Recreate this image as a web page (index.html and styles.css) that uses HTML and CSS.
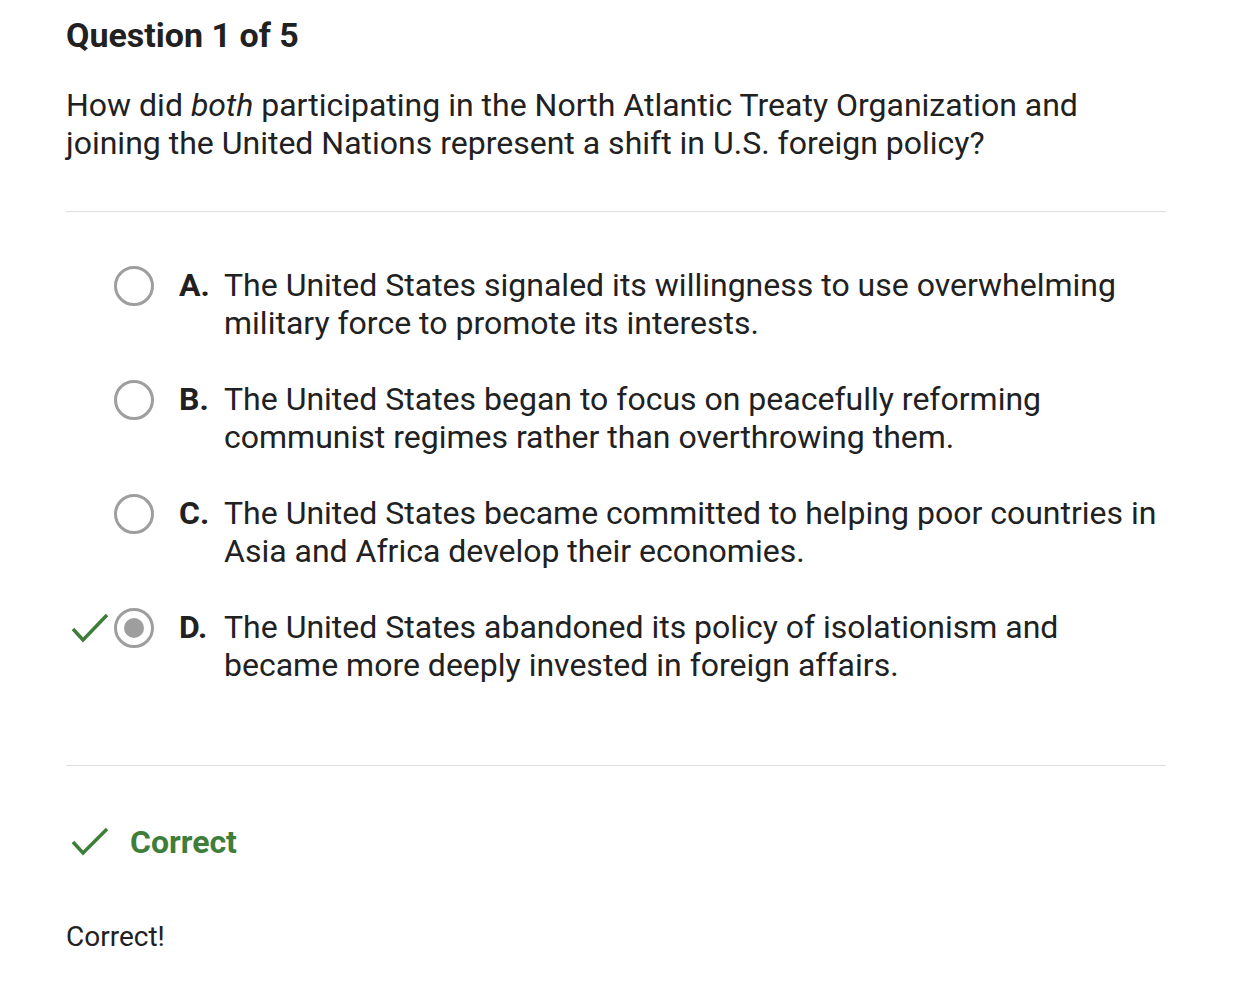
FILE: index.html
```html
<!DOCTYPE html>
<html lang="en">
<head>
    <meta charset="UTF-8">
    <title>Question 1 of 5</title>
    <link rel="stylesheet" href="styles.css">
</head>
<body>
    <div class="quiz">
        <h1 class="quiz-title">Question 1 of 5</h1>
        <p class="prompt">How did <em>both</em> participating in the North Atlantic Treaty Organization and joining the United Nations represent a shift in U.S. foreign policy?</p>

        <hr class="divider">

        <ul class="options">
            <li class="option">
                <span class="mark"></span>
                <span class="radio"></span>
                <span class="letter">A.</span>
                <span class="text">The United States signaled its willingness to use overwhelming military force to promote its interests.</span>
            </li>
            <li class="option">
                <span class="mark"></span>
                <span class="radio"></span>
                <span class="letter">B.</span>
                <span class="text">The United States began to focus on peacefully reforming communist regimes rather than overthrowing them.</span>
            </li>
            <li class="option">
                <span class="mark"></span>
                <span class="radio"></span>
                <span class="letter">C.</span>
                <span class="text">The United States became committed to helping poor countries in Asia and Africa develop their economies.</span>
            </li>
            <li class="option">
                <span class="mark">
                    <svg width="48" height="40" viewBox="0 0 48 40"><polyline points="7,21 17,32 41,7" fill="none" stroke="#3f7d3a" stroke-width="3.5"/></svg>
                </span>
                <span class="radio selected"></span>
                <span class="letter">D.</span>
                <span class="text">The United States abandoned its policy of isolationism and became more deeply invested in foreign affairs.</span>
            </li>
        </ul>

        <hr class="divider bottom">

        <div class="result">
            <svg width="48" height="40" viewBox="0 0 48 40"><polyline points="7,20 17,31 41,7" fill="none" stroke="#3f7d3a" stroke-width="3.5"/></svg>
            <span>Correct</span>
        </div>
        <p class="feedback">Correct!</p>
    </div>
</body>
</html>
```

FILE: styles.css
```css
body {
    margin: 0;
    font-family: Roboto, "Liberation Sans", Arial, sans-serif;
    color: #212121;
    background-color: #ffffff;
}
.quiz {
    width: 1100px;
    padding: 15px 0 0 66px;
}
.quiz-title {
    margin: 0;
    font-size: 34px;
    line-height: 40px;
    font-weight: 700;
}
.prompt {
    margin: 31px 0 0;
    font-size: 32px;
    line-height: 38px;
}
.divider {
    margin: 49px 0 0;
    border: none;
    border-top: 1px solid #dddddd;
    height: 0;
}
.divider.bottom {
    margin-top: 81px;
}
.options {
    list-style: none;
    margin: 54px 0 0;
    padding: 0;
}
.option {
    display: flex;
    align-items: flex-start;
    font-size: 32px;
    line-height: 38px;
    margin-bottom: 38px;
}
.option:last-child {
    margin-bottom: 0;
}
.mark {
    width: 48px;
    height: 40px;
    flex-shrink: 0;
}
.mark svg {
    display: block;
}
.radio {
    box-sizing: border-box;
    width: 40px;
    height: 40px;
    border: 3px solid #9e9e9e;
    border-radius: 50%;
    flex-shrink: 0;
    margin-right: 25px;
    display: flex;
    align-items: center;
    justify-content: center;
}
.radio.selected::after {
    content: "";
    width: 20px;
    height: 20px;
    border-radius: 50%;
    background-color: #9e9e9e;
}
.letter {
    width: 45px;
    flex-shrink: 0;
    font-weight: 700;
}
.text {
    flex: 1;
}
.result {
    display: flex;
    align-items: center;
    margin-top: 56px;
    height: 40px;
    color: #3f7d3a;
    font-size: 32px;
    font-weight: 700;
}
.result svg {
    display: block;
    margin-right: 16px;
}
.feedback {
    margin: 59px 0 0;
    font-size: 28px;
    line-height: 32px;
}
```
